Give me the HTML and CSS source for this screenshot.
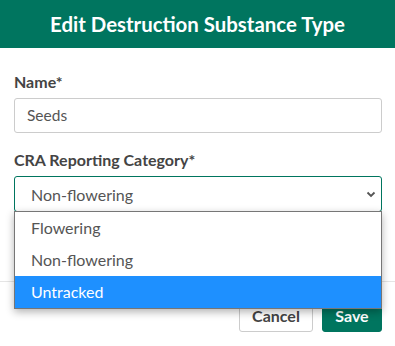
FILE: index.html
```html
<!DOCTYPE html>
<html>
<head>
    <title>Edit Destruction Substance Type</title>
    <link rel="stylesheet" href="styles.css">
</head>
<body>
    <div class="modal">
        <div class="modal-header">Edit Destruction Substance Type</div>

        <div class="modal-body">
            <label class="field-label">Name*</label>
            <div class="text-input">Seeds</div>

            <label class="field-label">CRA Reporting Category*</label>
            <div class="select-wrap">
                <div class="select-box">
                    <span>Non-flowering</span>
                    <svg class="chevron" width="10" height="7" viewBox="0 0 10 7">
                        <path d="M1.5 1.5 L5 5 L8.5 1.5" fill="none" stroke="#555" stroke-width="1.8"/>
                    </svg>
                </div>
                <ul class="select-options">
                    <li>Flowering</li>
                    <li>Non-flowering</li>
                    <li class="active">Untracked</li>
                </ul>
            </div>
        </div>

        <div class="modal-footer">
            <button class="btn-cancel">Cancel</button>
            <button class="btn-save">Save</button>
        </div>
    </div>
</body>
</html>
```

FILE: styles.css
```css
body, html {
    margin: 0;
    font-family: Lato, "Open Sans", sans-serif;
    background-color: #fff;
}

.modal {
    width: 395px;
}

.modal-header {
    height: 48px;
    line-height: 48px;
    background-color: #00755f;
    color: #fff;
    font-size: 20.4px;
    font-weight: bold;
    text-align: center;
}

.modal-body {
    padding: 24px 13px 69px 14px;
}

.field-label {
    display: block;
    font-size: 16px;
    font-weight: bold;
    color: #444;
    line-height: 20px;
    margin-bottom: 6px;
}

.text-input {
    height: 33px;
    line-height: 33px;
    padding: 0 12px;
    border: 1px solid #ccc;
    border-radius: 3px;
    font-size: 15.5px;
    color: #555;
    margin-bottom: 17px;
}

.select-wrap {
    position: relative;
}

.select-box {
    display: flex;
    align-items: center;
    justify-content: space-between;
    height: 34px;
    padding: 0 5px 0 16px;
    border: 1px solid #00755f;
    border-radius: 3px;
    font-size: 16px;
    color: #555;
}

.select-options {
    position: absolute;
    top: 35px;
    left: 0;
    right: 0;
    margin: 0;
    padding: 0;
    list-style: none;
    background: #fff;
    border: 1px solid #767676;
    box-shadow: 0 3px 8px rgba(0, 0, 0, 0.3);
}

.select-options li {
    height: 32px;
    line-height: 32px;
    padding: 0 16px;
    font-size: 16px;
    color: #555;
}

.select-options li.active {
    background-color: #1e90ff;
    color: #fff;
}

.modal-footer {
    display: flex;
    justify-content: flex-end;
    gap: 9px;
    border-top: 1px solid #e5e5e5;
    padding: 16px 13px 14px;
}

button {
    height: 34px;
    border-radius: 3px;
    font-family: Lato, sans-serif;
    font-size: 16px;
    font-weight: bold;
    cursor: pointer;
}

.btn-cancel {
    width: 74px;
    background: #fff;
    border: 1px solid #ccc;
    color: #444;
}

.btn-save {
    width: 60px;
    background: #00755f;
    border: 1px solid #00755f;
    color: #fff;
}
```
